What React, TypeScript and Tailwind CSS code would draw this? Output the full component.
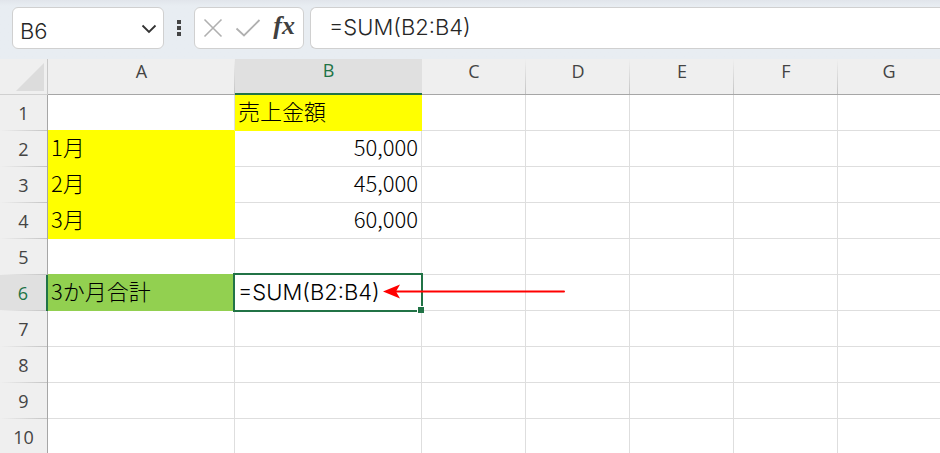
import { useState } from 'react'
import clsx from 'clsx'

type Cell = { text: string; fill?: 'yellow' | 'green'; number?: boolean }

const columns = ['A', 'B', 'C', 'D', 'E', 'F', 'G']
const rows = [1, 2, 3, 4, 5, 6, 7, 8, 9, 10]
const selected = { column: 'B', row: 6 }

const widths: Record<string, string> = {
  A: 'w-[187px]',
  B: 'w-[187px]',
  C: 'w-[104px]',
  D: 'w-[104px]',
  E: 'w-[104px]',
  F: 'w-[104px]',
}

const fills = {
  yellow: 'bg-[#ffff00] border-[#ffff00]',
  green: 'bg-[#92d050] border-[#92d050]',
}

const cells: Record<string, Cell> = {
  B1: { text: '売上金額', fill: 'yellow' },
  A2: { text: '1月', fill: 'yellow' },
  B2: { text: '50,000', number: true },
  A3: { text: '2月', fill: 'yellow' },
  B3: { text: '45,000', number: true },
  A4: { text: '3月', fill: 'yellow' },
  B4: { text: '60,000', number: true },
  A6: { text: '3か月合計', fill: 'green' },
}

function FormulaBar({ formula, onChange }: { formula: string; onChange: (value: string) => void }) {
  return (
    <div className="flex h-[59px] items-start bg-[#e8edf2] bg-linear-to-b from-[#e1e5eb] to-[#e8edf2] to-10% pt-[7px] pl-3">
      <div className="flex h-[42px] w-[152px] shrink-0 items-center rounded-md border border-[#d0d0d0] bg-white pr-[3px] pl-[7px]">
        <input
          aria-label="Name box"
          defaultValue="B6"
          className="w-full min-w-0 pt-1.5 font-['Inter',sans-serif] text-[22px] leading-8 text-[#262626] outline-none"
        />
        <button aria-label="Show names" className="shrink-0 p-0.5">
          <svg width="18" height="18" viewBox="0 0 18 18" fill="none" stroke="#333" strokeWidth="1.8">
            <path d="M2.5 6.5L9 13l6.5-6.5" />
          </svg>
        </button>
      </div>
      <div className="flex h-[42px] w-[30px] shrink-0 items-center justify-center">
        <svg width="4" height="16" viewBox="0 0 4 16" fill="#444">
          <path d="M0 0h4v4H0zM0 6h4v4H0zM0 12h4v4H0z" />
        </svg>
      </div>
      <div className="flex h-[42px] w-[110px] shrink-0 items-center justify-between rounded-md border border-[#d0d0d0] bg-white px-2">
        <button aria-label="Cancel">
          <svg width="20" height="20" viewBox="0 0 20 20" fill="none" stroke="#b0b0b0" strokeWidth="1.6">
            <path d="M1.5 1.5l17 17M18.5 1.5l-17 17" />
          </svg>
        </button>
        <button aria-label="Enter">
          <svg width="26" height="20" viewBox="0 0 26 20" fill="none" stroke="#b0b0b0" strokeWidth="1.8">
            <path d="M1.5 10.5l7.5 7L24.5 2" />
          </svg>
        </button>
        <button
          aria-label="Insert function"
          className="pb-1 font-['Liberation_Serif',serif] text-[26px] leading-8 font-bold text-[#404040] italic"
        >
          fx
        </button>
      </div>
      <input
        aria-label="Formula bar"
        value={formula}
        onChange={(e) => onChange(e.target.value)}
        className="ml-1.5 h-[42px] min-w-0 flex-1 rounded-l-md border border-r-0 border-[#d0d0d0] bg-white pb-0.5 pl-[18px] font-['Inter',sans-serif] text-[22px] text-[#262626] outline-none"
      />
    </div>
  )
}

function Selection() {
  return (
    <>
      <div className="pointer-events-none absolute -inset-0.5 z-10 border-2 border-[#217346]">
        <div className="absolute -right-[3px] -bottom-[3px] size-[7px] border-t border-l border-white bg-[#217346]" />
      </div>
      <svg className="absolute top-[9px] left-[148px] z-20" width="183" height="16" viewBox="0 0 183 16">
        <path d="M13 7.5H181" stroke="#ff0000" strokeWidth="2" strokeLinecap="round" />
        <path d="M0 7.5L17 .5l-4 7 4 7z" fill="#ff0000" />
      </svg>
    </>
  )
}

function Sheet({ formula }: { formula: string }) {
  return (
    <table className="w-full table-fixed border-separate border-spacing-0 bg-white">
      <colgroup>
        <col className="w-12" />
        {columns.map((column) => (
          <col key={column} className={widths[column]} />
        ))}
      </colgroup>
      <thead>
        <tr className="h-9">
          <td className="border-r border-b border-r-[#c8c8c8] border-b-[#d0d0d0] bg-[#efefef] p-0">
            <svg className="ml-4" width="28" height="28" viewBox="0 0 28 28" fill="#dcdcdc">
              <path d="M28 0v28H0z" />
            </svg>
          </td>
          {columns.map((column) => (
            <th
              key={column}
              scope="col"
              className={clsx(
                "p-0 pb-3 font-['Open_Sans',sans-serif] text-lg leading-[22px] font-normal",
                column === selected.column
                  ? 'border-b-2 border-[#217346] bg-[#e0e0e0] text-[#217346]'
                  : 'border-b border-[#a6a6a6] bg-[#efefef] bg-[linear-gradient(to_bottom,#efefef,#c4c4c4)] bg-[length:1px_100%] bg-right bg-no-repeat text-[#444] last:bg-none',
              )}
            >
              {column}
            </th>
          ))}
        </tr>
      </thead>
      <tbody>
        {rows.map((row) => (
          <tr key={row} className="h-9">
            <th
              scope="row"
              className={clsx(
                "bg-[linear-gradient(to_right,#efefef,#c4c4c4)] bg-[length:100%_1px] bg-bottom bg-no-repeat p-0 font-['Open_Sans',sans-serif] text-lg leading-6 font-normal",
                row === selected.row
                  ? 'border-r-2 border-[#217346] bg-[#e0e0e0] text-[#217346]'
                  : 'border-r border-[#a6a6a6] bg-[#efefef] text-[#444]',
              )}
            >
              {row}
            </th>
            {columns.map((column) => {
              const cell = cells[`${column}${row}`]
              const below = cells[`${column}${row + 1}`]
              const active = column === selected.column && row === selected.row
              return (
                <td
                  key={column}
                  className={clsx(
                    'relative border-r border-b px-[3px] pt-0 text-[22px] leading-7 whitespace-nowrap text-black last:border-r-0',
                    active ? "pb-0.5 font-['Inter',sans-serif]" : 'pb-1.5',
                    cell?.fill ? fills[cell.fill] : 'border-[#dedede]',
                    below?.fill === 'yellow' && 'border-b-[#ffff00]',
                    below?.fill === 'green' && 'border-b-[#92d050]',
                    cell?.number && 'text-right',
                  )}
                >
                  {active ? formula : cell?.text}
                  {active && <Selection />}
                </td>
              )
            })}
          </tr>
        ))}
      </tbody>
    </table>
  )
}

export default function App(): React.ReactElement {
  const [formula, setFormula] = useState('=SUM(B2:B4)')

  return (
    <div className="h-screen overflow-hidden bg-white font-['Noto_Sans_CJK_JP',sans-serif] font-light" lang="ja">
      <FormulaBar formula={formula} onChange={setFormula} />
      <Sheet formula={formula} />
    </div>
  )
}
